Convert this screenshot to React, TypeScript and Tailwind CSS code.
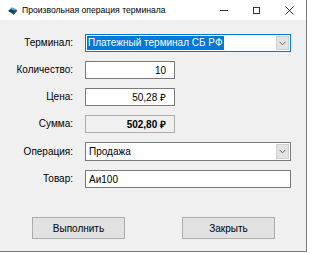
import React from "react";

const font = { fontFamily: '"Liberation Sans", Arial, sans-serif' };

function Chevron() {
  return (
    <svg width="7" height="5" viewBox="0 0 7 5">
      <path d="M0.5 0.8 L3.5 3.8 L6.5 0.8" fill="none" stroke="#606060" strokeWidth="1" />
    </svg>
  );
}

function Label({ children }: { children: React.ReactNode }) {
  return <div className="text-right text-[10px] text-black leading-none whitespace-nowrap">{children}</div>;
}

export default function App() {
  return (
    <div className="w-[310px] h-[254px] bg-white" style={font}>
      <div className="w-[307px] h-[252px] border-r border-b border-[#7a7a7a] bg-[#f0f0f0] flex flex-col">
        {/* title bar */}
        <div className="h-[20px] bg-white flex items-center shrink-0">
          <div className="w-[22px] flex items-center justify-center pl-[2px]">
            <svg width="11" height="11" viewBox="0 0 11 11">
              <path d="M1 6 L5 2.5 L10 5 L6 9 Z" fill="#1d3f5c" />
              <path d="M5 2.5 L10 5 L7 5.5 L3.5 4 Z" fill="#3fb7d6" />
              <path d="M6 9 L10 5 L10 6 L6.5 10 Z" fill="#0d2233" />
            </svg>
          </div>
          <div className="text-[8.6px] text-black flex-1 leading-none whitespace-nowrap">Произвольная операция терминала</div>
          <div className="flex items-center h-full">
            <div className="w-[33px] flex justify-center items-center">
              <div className="w-[8px] h-px bg-[#333]" />
            </div>
            <div className="w-[33px] flex justify-center items-center">
              <div className="w-[7px] h-[7px] border border-[#333]" />
            </div>
            <div className="w-[33px] flex justify-center items-center">
              <svg width="9" height="9" viewBox="0 0 9 9">
                <path d="M0.5 0.5 L8.5 8.5 M8.5 0.5 L0.5 8.5" stroke="#333" strokeWidth="1" />
              </svg>
            </div>
          </div>
        </div>

        {/* form */}
        <div className="grid grid-cols-[73px_1fr] gap-x-[12px] gap-y-[9px] items-center pt-[14px] pr-[15px]">
          <Label>Терминал:</Label>
          <div className="h-[18px] border border-[#0078d7] bg-white flex items-center">
            <div className="flex-1 pl-[1px] flex items-center">
              <span className="bg-[#0078d7] text-white text-[10px] leading-none px-[1px] py-[2px] whitespace-nowrap">Платежный терминал СБ РФ</span>
            </div>
            <div className="w-[13px] h-[14px] mr-px bg-[#e3e3e3] border border-[#cfcfcf] flex items-center justify-center">
              <Chevron />
            </div>
          </div>

          <Label>Количество:</Label>
          <div className="w-[90px] h-[18px] border border-[#7a7a7a] bg-white flex items-center justify-end pr-[8px] text-[10px] text-black">10</div>

          <Label>Цена:</Label>
          <div className="w-[90px] h-[18px] border border-[#7a7a7a] bg-white flex items-center justify-end pr-[8px] text-[10px] text-black">50,28 ₽</div>

          <Label>Сумма:</Label>
          <div className="w-[90px] h-[18px] border border-[#adadad] bg-[#f0f0f0] flex items-center justify-end pr-[8px] text-[10px] font-bold text-black">502,80 ₽</div>

          <Label>Операция:</Label>
          <div className="h-[19px] border border-[#7a7a7a] bg-white flex items-center">
            <div className="flex-1 pl-[3px] text-[10px] text-black leading-none">Продажа</div>
            <div className="w-[13px] h-[15px] mr-px bg-[#e3e3e3] border border-[#cfcfcf] flex items-center justify-center">
              <Chevron />
            </div>
          </div>

          <Label>Товар:</Label>
          <div className="h-[18px] border border-[#7a7a7a] bg-white flex items-center pl-[3px] text-[10px] text-black">Аи100</div>
        </div>

        {/* buttons */}
        <div className="flex pt-[29px] pl-[32px] gap-[57px]">
          <div className="w-[93px] h-[22px] bg-[#e1e1e1] border border-[#adadad] flex items-center justify-center text-[10px] text-black">Выполнить</div>
          <div className="w-[93px] h-[22px] bg-[#e1e1e1] border border-[#adadad] flex items-center justify-center text-[10px] text-black">Закрыть</div>
        </div>
      </div>
    </div>
  );
}
